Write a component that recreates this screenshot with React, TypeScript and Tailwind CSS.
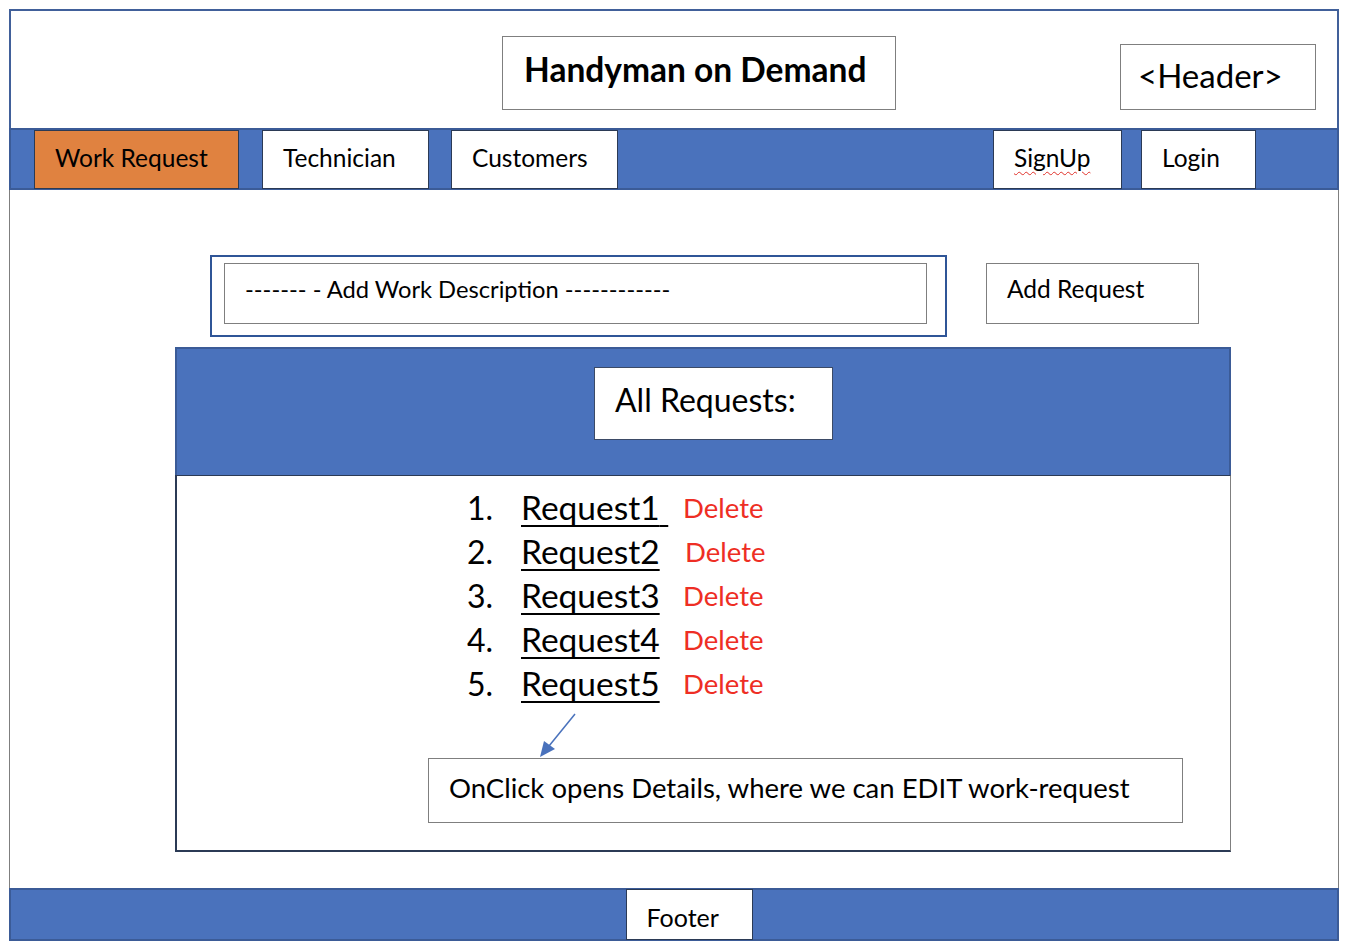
const requests = ['Request1', 'Request2', 'Request3', 'Request4', 'Request5'];

const font = "font-['Lato','Liberation_Sans',sans-serif]";

function NavItem({ label, active, width, wavy }: { label: string; active?: boolean; width: string; wavy?: boolean }) {
  return (
    <div
      className={`${width} h-[59px] flex items-center pl-[20px] pb-[2px] border border-[#2b3a55] text-[24.5px] text-black ${
        active ? 'bg-[#e08240]' : 'bg-white'
      }`}
    >
      <span className={wavy ? 'underline decoration-wavy decoration-[#e0312a] decoration-1 underline-offset-4' : ''}>
        {label}
      </span>
    </div>
  );
}

export default function App() {
  return (
    <div className={`w-[1348px] h-[950px] bg-white pt-[9px] pl-[9px] ${font}`}>
      <div className="w-[1330px]">
        {/* header */}
        <div className="h-[119px] border-2 border-b-0 border-[#41609a] flex items-start pl-[491px] pt-[25px]">
          <div className="w-[394px] h-[74px] border border-[#7f7f7f] flex items-center pl-[21px] pb-[7px]">
            <span className="text-[33.5px] font-bold text-black">Handyman on Demand</span>
          </div>
          <div className="ml-[224px] mt-[8px] w-[196px] h-[66px] border border-[#7f7f7f] flex items-center pl-[17px] pb-[2px]">
            <span className="text-[33px] text-black">&lt;Header&gt;</span>
          </div>
        </div>

        {/* nav */}
        <div className="h-[62px] bg-[#4a72bc] border-2 border-[#3b5b97] flex items-center pl-[23px]">
          <NavItem label="Work Request" active width="w-[205px]" />
          <div className="ml-[23px]">
            <NavItem label="Technician" width="w-[167px]" />
          </div>
          <div className="ml-[22px]">
            <NavItem label="Customers" width="w-[167px]" />
          </div>
          <div className="ml-[375px]">
            <NavItem label="SignUp" width="w-[129px]" wavy />
          </div>
          <div className="ml-[19px]">
            <NavItem label="Login" width="w-[115px]" />
          </div>
        </div>

        {/* body */}
        <div className="h-[698px] border-x border-[#7f7f7f] pt-[65px]">
          <div className="flex items-start pl-[200px]">
            <div className="w-[737px] h-[82px] border-2 border-[#2f5597] pt-[6px] pl-[12px]">
              <div className="w-[703px] h-[61px] border border-[#7f7f7f] flex items-center pl-[20px] pb-[8px]">
                <span className="text-[23.7px] text-black">------- - Add Work Description ------------</span>
              </div>
            </div>
            <div className="ml-[39px] mt-[8px] w-[213px] h-[61px] border border-[#7f7f7f] flex items-center pl-[20px] pb-[8px]">
              <span className="text-[24.5px] text-black">Add Request</span>
            </div>
          </div>

          {/* requests panel */}
          <div className="ml-[165px] mt-[10px] w-[1056px]">
            <div className="h-[128px] bg-[#4a72bc] border-2 border-b-0 border-[#3b5b97] pl-[417px] pt-[18px]">
              <div className="w-[239px] h-[73px] bg-white border border-[#3b4a66] flex items-center pl-[20px] pb-[8px]">
                <span className="text-[32px] text-black">All Requests:</span>
              </div>
            </div>
            <div className="relative h-[377px] border-l-2 border-b-2 border-r border-l-[#2b3a55] border-b-[#2b3a55] border-r-[#7f7f7f] border-t border-t-[#2b3a55] pt-[14px]">
              <ol className="flex flex-col gap-[9px] pl-[290px]">
                {requests.map((r, i) => (
                  <li key={r} className="flex items-center h-[35px]">
                    <span className="w-[54px] text-[32px] text-black">{i + 1}.</span>
                    <span className="w-[162px] text-[33.5px] text-black underline decoration-2 underline-offset-[5px]">
                      {r}
                      {i === 0 ? '\u00a0' : ''}
                    </span>
                    <span className={`${i === 1 ? 'ml-[2px]' : ''} text-[27.5px] text-[#ee2e24]`}>Delete</span>
                  </li>
                ))}
              </ol>
              <svg className="absolute left-[362px] top-[236px]" width="40" height="46" viewBox="0 0 40 46">
                <line x1="36" y1="2" x2="10" y2="34" stroke="#4a72bc" strokeWidth="1.5" />
                <polygon points="1,45 5,29 16,37" fill="#4a72bc" />
              </svg>
              <div className="ml-[251px] mt-[57px] w-[755px] h-[65px] border border-[#7f7f7f] flex items-center pl-[20px] pb-[6px]">
                <span className="text-[27.5px] text-black">OnClick opens Details, where we can EDIT work-request</span>
              </div>
            </div>
          </div>
        </div>

        {/* footer */}
        <div className="h-[53px] bg-[#4a72bc] border-2 border-[#3b5b97] flex justify-center pl-[30px]">
          <div className="w-[127px] h-[51px] -mt-[1px] bg-white border border-[#2b3a55] flex items-center pl-[20px] pt-[6px]">
            <span className="text-[25px] text-black">Footer</span>
          </div>
        </div>
      </div>
    </div>
  );
}
